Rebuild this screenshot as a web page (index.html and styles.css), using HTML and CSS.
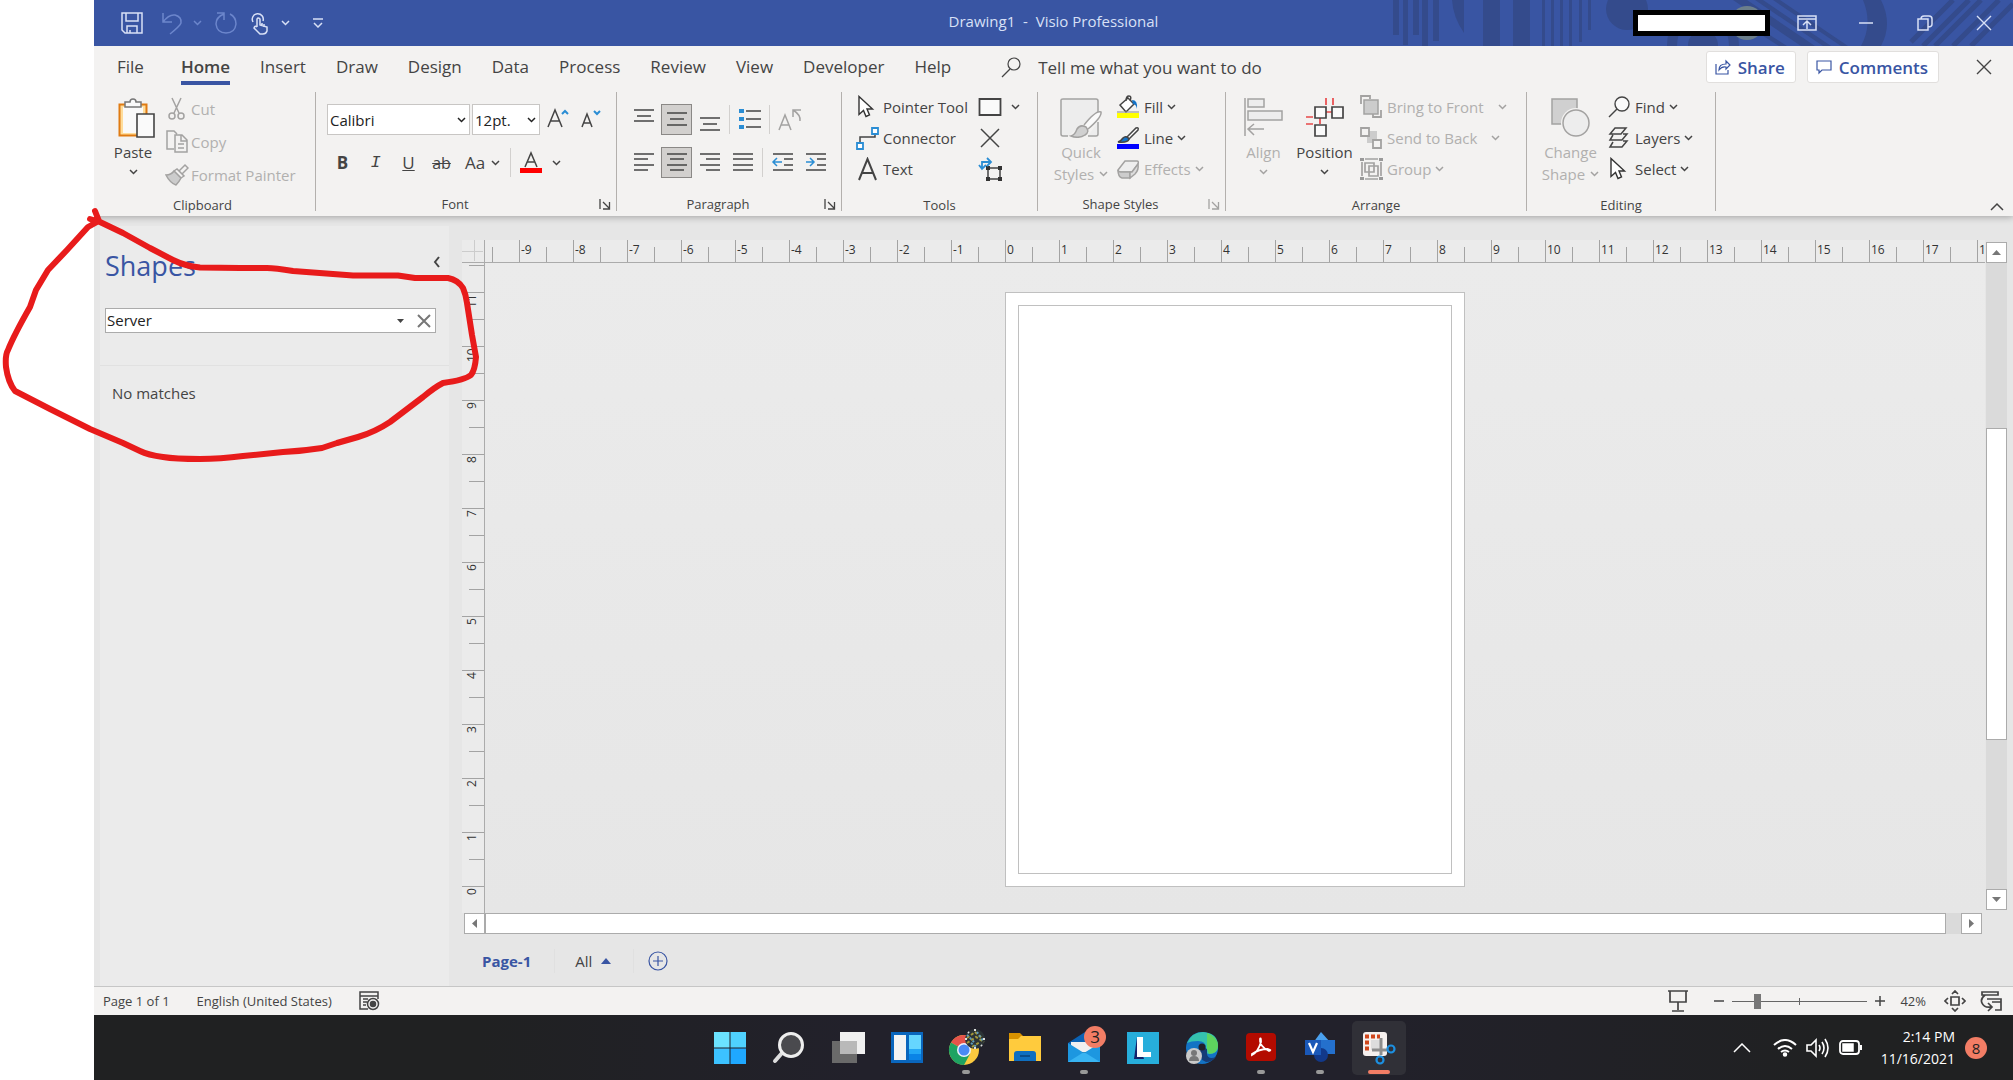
FILE: index.html
```html
<!DOCTYPE html>
<html lang="en">
<head>
    <meta charset="UTF-8">
    <meta name="viewport" content="width=device-width, initial-scale=1.0">
    <title>Drawing1 - Visio Professional</title>
    <link rel="stylesheet" href="styles.css">
</head>
<body>
    <!-- shared icons -->
    <svg class="sprite" width="0" height="0" aria-hidden="true">
        <symbol id="chevron" viewBox="0 0 9 6"><path d="M1 1l3.500 3.500L8 1" fill="none" stroke="currentColor" stroke-width="1.500"/></symbol>
        <symbol id="launcher" viewBox="0 0 12 12"><path d="M1 0v10M4 3l6 6M10.500 3v7H4" fill="none" stroke="currentColor" stroke-width="1.300"/></symbol>
        <symbol id="close" viewBox="0 0 16 16"><path d="M1 1l14 14M15 1L1 15" fill="none" stroke="currentColor" stroke-width="1.400"/></symbol>
        <symbol id="pointer" viewBox="0 0 24 24"><path d="M4 1.500v18l4.500-4 2.500 6 3.500-1.500-2.500-6h5.500z" fill="#fff" stroke="#333" stroke-width="1.400"/></symbol>
        <symbol id="find" viewBox="0 0 24 24"><circle cx="15" cy="9" r="7" fill="#fafafa" stroke="currentColor" stroke-width="1.400"/><path d="M10 14l-8 8" stroke="currentColor" stroke-width="1.500"/></symbol>
    </svg>

    <div class="window">
        <header class="title-bar">
            <svg class="pattern" viewBox="0 0 650 46" width="650" height="46">
                <g fill="#344b8c">
                    <path d="M30 0h6v35h-6zM40 0h5v45h-5zM50 0h6v35h-6zM59 0h6v46h-6zM70 0h6v41h-6zM89 0h12v33Q90 17 89 0zM120 0h17v46h-17zM150 0h17v46h-17z"/>
                    <path d="M179 0h3v46h-3zM188 0h3v46h-3zM197 0h3v46h-3zM206 0h3v46h-3zM216 0h3v42h-3zM225 0h3v30h-3z"/>
                    <circle cx="264" cy="9" r="21"/>
                    <path d="M304 46q0-34 36-34t36 34h-10q0-24-26-24t-26 24zM325 46q0-14 15-14t15 14z"/>
                    <path d="M370 0h14l68 46h-14zM392 0h8l68 46h-8zM410 0h7l68 46h-7zM374 14l50 32h-8l-44-28zM500 0h18q12 24 0 46h-20q12-22 2-46z"/>
                </g>
                <path d="M548 42l42-42M560 46l46-46M572 46l46-46M590 46l46-46M608 46l42-42" stroke="#344b8c" stroke-width="5"/>
            </svg>
            <div class="quick-access">
                <button aria-label="Save"><svg width="24" height="24" viewBox="0 0 24 24"><path d="M2 2h20v20H5l-3-3zM6 2v8h12V2M7 22v-7h10v7M10 19v3"/></svg></button>
                <button class="dim undo" aria-label="Undo"><svg width="24" height="24" viewBox="0 0 24 24"><path d="M3 2v9h9M3 11Q9 3 15 4q7 2 6 8-1 3-11 11"/></svg></button>
                <button class="dim narrow" aria-label="Undo history"><svg width="9" height="6"><use href="#chevron"/></svg></button>
                <button class="dim redo" aria-label="Redo"><svg width="24" height="24" viewBox="0 0 24 24"><path d="M3 2h7v7M10 3Q2 6 2 13q1 9 10 9 9 0 10-9 0-7-6-10"/></svg></button>
                <button class="touch" aria-label="Touch mode"><svg width="24" height="24" viewBox="0 0 24 24"><path d="M4 11a5.500 5.500 0 1 1 10-1M8 16V8q1-2 3 0v6l7 2v4q-1 3-4 3h-3l-6-6q1-3 3-1M13 12v3M15 13v3"/></svg></button>
                <button class="narrow" aria-label="Touch options"><svg width="9" height="6"><use href="#chevron"/></svg></button>
                <button class="customize" aria-label="Customize toolbar"><svg width="12" height="10" viewBox="0 0 12 10"><path d="M1 1h10M2 5l4 4 4-4"/></svg></button>
            </div>
            <h1>Drawing1&nbsp; -&nbsp; Visio Professional</h1>
            <div class="window-buttons">
                <span class="account"><span class="avatar"></span><span class="name-box"></span></span>
                <button aria-label="Ribbon display options"><svg width="20" height="16" viewBox="0 0 20 16"><path d="M1 1h18v14H1zM1 4h18M10 14V7M6 10l4-4 4 4"/></svg></button>
                <button aria-label="Minimize"><svg width="16" height="16" viewBox="0 0 16 16"><path d="M1 8h14"/></svg></button>
                <button aria-label="Restore"><svg width="16" height="16" viewBox="0 0 16 16"><path d="M1 4h10v11H1zM4 4q0-3 3-3h5q3 0 3 3v5q0 3-4 3"/></svg></button>
                <button aria-label="Close window"><svg width="16" height="16"><use href="#close"/></svg></button>
            </div>
        </header>

        <nav class="tabs">
            <a href="#file" class="file">File</a>
            <a href="#home" class="active">Home</a>
            <a href="#insert">Insert</a>
            <a href="#draw">Draw</a>
            <a href="#design">Design</a>
            <a href="#data">Data</a>
            <a href="#process">Process</a>
            <a href="#review">Review</a>
            <a href="#view">View</a>
            <a href="#developer">Developer</a>
            <a href="#help">Help</a>
            <button class="tell-me"><svg width="22" height="22" viewBox="0 0 22 22"><circle cx="14" cy="8" r="6"/><path d="M10 13l-8 8"/></svg>Tell me what you want to do</button>
            <button class="pill share"><svg width="16" height="16" viewBox="0 0 16 16"><path d="M1 5v10h12v-4M4 11q0-6 7-6V2l4 4-4 4V8q-4-1-7 3z"/></svg>Share</button>
            <button class="pill"><svg width="16" height="16" viewBox="0 0 16 16"><path d="M1 2h14v9H6l-3 3v-3H1z"/></svg>Comments</button>
            <button class="close-doc" aria-label="Close document"><svg width="16" height="16"><use href="#close"/></svg></button>
        </nav>

        <div class="ribbon">
            <section class="group clipboard">
                <div class="group-body">
                    <button class="big paste">
                        <svg width="46" height="40" viewBox="0 0 46 40">
                            <path d="M9.500 6.500h27v31h-27z" fill="#ffdd9b" stroke="#e07b12" stroke-width="2"/>
                            <path d="M13 9h20v26H13z" fill="#fafafa" stroke="none"/>
                            <path d="M15 9V4h5q0-3 3-3t3 3h5v5z" fill="#fafafa" stroke="#777" stroke-width="1.500"/>
                            <path d="M27 16h17v23H27z" fill="#fafafa" stroke="#444" stroke-width="1.600"/>
                        </svg>
                        <span>Paste</span>
                        <svg width="9" height="6"><use href="#chevron"/></svg>
                    </button>
                    <div class="rows">
                        <button disabled><svg width="24" height="24" viewBox="0 0 24 24"><path d="M7 1l7 15M16 1L9 16"/><circle cx="7" cy="19" r="3"/><circle cx="16" cy="19" r="3"/></svg>Cut</button>
                        <button disabled><svg width="24" height="24" viewBox="0 0 24 24"><path d="M9 19H2V1h7l3 3M10 5h7l5 5v12H10zM16 5v6h6M13 14h6M13 18h6"/></svg>Copy</button>
                        <button disabled><svg width="24" height="24" viewBox="0 0 24 24"><path d="M1 12q5 0 8-4l7 7q-2 4-5 7-6-2-10-10z" fill="#ccc"/><path d="M9 8l3-2 7 7-3 2M14 8l6-6 3 3-6 6"/></svg>Format Painter</button>
                    </div>
                </div>
                <div class="group-label"><h2>Clipboard</h2><span class="label-space"></span></div>
            </section>

            <section class="group font">
                <div class="group-body toolbars">
                    <div class="toolbar">
                        <label class="combo family"><select aria-label="Font"><option>Calibri</option></select><svg width="9" height="6"><use href="#chevron"/></svg></label>
                        <label class="combo size"><select aria-label="Font size"><option>12pt.</option></select><svg width="9" height="6"><use href="#chevron"/></svg></label>
                        <button aria-label="Increase font size"><svg width="24" height="24" viewBox="0 0 24 24"><path d="M2 19L9 2l7 17M5 13h8"/><path d="M16 6l3-3 3 3" stroke="#2a8dd4" stroke-width="2"/></svg></button>
                        <button aria-label="Decrease font size"><svg width="24" height="24" viewBox="0 0 24 24"><path d="M3 19L8 6l5 13M5 15h7"/><path d="M15 3l3 3 3-3" stroke="#2a8dd4" stroke-width="2"/></svg></button>
                    </div>
                    <div class="toolbar letters">
                        <button class="bold">B</button>
                        <button class="italic">I</button>
                        <button class="underline">U</button>
                        <button class="strike">ab</button>
                        <button class="case">Aa<svg width="9" height="6"><use href="#chevron"/></svg></button>
                        <span class="sep"></span>
                        <button aria-label="Font color"><svg width="24" height="24" viewBox="0 0 24 24"><path d="M6 16l6-14 6 14M8 11h8"/><path d="M1 17h22v5H1z" fill="#f00" stroke="none"/></svg></button>
                        <button class="narrow" aria-label="Font color options"><svg width="9" height="6"><use href="#chevron"/></svg></button>
                    </div>
                </div>
                <div class="group-label"><h2>Font</h2><button aria-label="Font settings"><svg width="12" height="12"><use href="#launcher"/></svg></button></div>
            </section>

            <section class="group paragraph">
                <div class="group-body toolbars">
                    <div class="toolbar">
                        <button aria-label="Align top"><svg width="24" height="24" viewBox="0 0 24 24"><path d="M2 2h20M5 8h14M2 13h20"/></svg></button>
                        <button class="on" aria-label="Align middle"><svg width="24" height="24" viewBox="0 0 24 24"><path d="M2 5h20M5 11h14M2 17h20"/></svg></button>
                        <button aria-label="Align bottom"><svg width="24" height="24" viewBox="0 0 24 24"><path d="M2 10h20M5 16h14M2 22h20"/></svg></button>
                        <span class="sep"></span>
                        <button aria-label="Bullets"><svg width="24" height="24" viewBox="0 0 24 24"><path d="M8 3h15M8 11h15M8 19h15"/><path d="M1 1h5v4H1zM1 9h5v4H1zM1 17h5v4H1z" fill="#2a8dd4" stroke="none"/></svg></button>
                        <span class="sep"></span>
                        <button disabled aria-label="Rotate text"><svg width="24" height="24" viewBox="0 0 24 24"><path d="M1 22L7 7l6 15M3 17h8M15 9V2h8M15 2q8 5 7 11"/></svg></button>
                    </div>
                    <div class="toolbar">
                        <button aria-label="Align left"><svg width="24" height="24" viewBox="0 0 24 24"><path d="M2 3h20M2 8h14M2 14h20M2 19h14"/></svg></button>
                        <button class="on" aria-label="Align center"><svg width="24" height="24" viewBox="0 0 24 24"><path d="M2 3h20M5 8h14M2 14h20M5 19h14"/></svg></button>
                        <button aria-label="Align right"><svg width="24" height="24" viewBox="0 0 24 24"><path d="M2 3h20M8 8h14M2 14h20M8 19h14"/></svg></button>
                        <button aria-label="Justify"><svg width="24" height="24" viewBox="0 0 24 24"><path d="M2 3h20M2 8h20M2 14h20M2 19h20"/></svg></button>
                        <span class="sep"></span>
                        <button aria-label="Decrease indent"><svg width="24" height="24" viewBox="0 0 24 24"><path d="M2 3h20M13 8h9M13 14h9M2 19h20"/><path d="M11 11H3M6 7l-4 4 4 4" stroke="#2a8dd4"/></svg></button>
                        <button aria-label="Increase indent"><svg width="24" height="24" viewBox="0 0 24 24"><path d="M2 3h20M13 8h9M13 14h9M2 19h20"/><path d="M2 11h8M6 7l4 4-4 4" stroke="#2a8dd4"/></svg></button>
                    </div>
                </div>
                <div class="group-label"><h2>Paragraph</h2><button aria-label="Paragraph settings"><svg width="12" height="12"><use href="#launcher"/></svg></button></div>
            </section>

            <section class="group tools">
                <div class="group-body">
                    <div class="rows">
                        <button><svg width="24" height="24"><use href="#pointer"/></svg>Pointer Tool</button>
                        <button><svg width="24" height="24" viewBox="0 0 24 24"><path d="M5 17v-6h15V8"/><path d="M2 17h6v6H2zM17 2h6v6h-6z" fill="#fff" stroke="#2a8dd4" stroke-width="1.800"/></svg>Connector</button>
                        <button><svg width="24" height="24" viewBox="0 0 24 24"><path d="M4 23L12.500 2 21 23M7 16h11" stroke-width="2"/></svg>Text</button>
                    </div>
                    <div class="rows draw-tools">
                        <button aria-label="Rectangle"><svg width="24" height="24" viewBox="0 0 24 24"><path d="M1.500 4h21v16h-21z" fill="#fafafa" stroke-width="1.800"/></svg><svg width="9" height="6"><use href="#chevron"/></svg></button>
                        <button aria-label="Connection point"><svg width="24" height="24" viewBox="0 0 24 24"><path d="M3 3l18 18M21 3L3 21"/></svg></button>
                        <button aria-label="Text block"><svg width="24" height="24" viewBox="0 0 24 24"><path d="M10 11h12v11H10z"/><path d="M8 9h4v4H8zM20 9h4v4h-4zM8 20h4v4H8zM20 20h4v4h-4z" fill="#333" stroke="none"/><path d="M4 11V5h8M9 1l4 4-4 4M1 8l3 4 4-4" stroke="#2a8dd4" stroke-width="1.800"/></svg></button>
                    </div>
                </div>
                <div class="group-label"><h2>Tools</h2></div>
            </section>

            <section class="group shape-styles">
                <div class="group-body">
                    <button class="big" disabled>
                        <svg width="42" height="40" viewBox="0 0 42 40">
                            <path d="M8 38H3q-2 0-2-2V2q0-1 2-1h33q2 0 2 2v12M38 24v12q0 2-2 2h-8" fill="#ededed" stroke-width="1.500"/>
                            <path d="M24 27Q36 12 41 14q1 5-13 17" fill="#fafafa"/>
                            <path d="M11 38q4-1 6-7 3-5 9-2 4 5-1 8-6 4-14 1z" fill="#d0d0d0"/>
                        </svg>
                        <span>Quick</span>
                        <span>Styles<svg width="9" height="6"><use href="#chevron"/></svg></span>
                    </button>
                    <div class="rows">
                        <button><svg width="24" height="24" viewBox="0 0 24 24"><path d="M4 10l8-7 6 6-8 8zM10 6q0-5 3-5t1 5" fill="#fff"/><path d="M16 5q6 0 5 9-1-5-4-5z" fill="#1473c8" stroke="none"/><path d="M1 18h22v5H1z" fill="#ff0" stroke="none"/><path d="M1 17h22" stroke="#888" stroke-width="1"/></svg>Fill<svg width="9" height="6"><use href="#chevron"/></svg></button>
                        <button><svg width="24" height="24" viewBox="0 0 24 24"><path d="M11 11l9-9q3-1 2 2l-9 9z" fill="#fff"/><path d="M2 16q3-1 5-4 3-3 6 1-1 4-11 3z" fill="#1473c8"/><path d="M1 18h22v5H1z" fill="#00f" stroke="none"/></svg>Line<svg width="9" height="6"><use href="#chevron"/></svg></button>
                        <button disabled><svg width="24" height="24" viewBox="0 0 24 24"><path d="M2 13L9 4h12q2 0 1 3l-6 8H5q-3 0-3-2z" fill="#eee"/><path d="M2 13q0 2 3 2h9v6H6q-4-1-4-8z" fill="#ccc"/><path d="M14 15h2l6-8q1 6-3 10l-5 4z" fill="#ddd"/></svg>Effects<svg width="9" height="6"><use href="#chevron"/></svg></button>
                    </div>
                </div>
                <div class="group-label"><h2>Shape Styles</h2><button disabled aria-label="Shape style settings"><svg width="12" height="12"><use href="#launcher"/></svg></button></div>
            </section>

            <section class="group arrange">
                <div class="group-body">
                    <button class="big" disabled>
                        <svg width="42" height="40" viewBox="0 0 42 40"><path d="M2 0v38" stroke-width="1.500"/><path d="M5 1h16v8H5zM5 13h34v9H5z" fill="#ededed" stroke-width="1.500"/><path d="M21 31H6M11 26l-6 5 6 6"/></svg>
                        <span>Align</span>
                        <svg width="9" height="6"><use href="#chevron"/></svg>
                    </button>
                    <button class="big">
                        <svg width="42" height="40" viewBox="0 0 42 40"><path d="M22 0v7M29 0v7M22 14h7M2 19h7M2 26h7M16 20v6" stroke="#e8494a" stroke-width="1.700"/><path d="M11 9h11v11H11zM28 9h11v11H28zM11 27h11v11H11z" fill="#fafafa" stroke-width="1.700"/></svg>
                        <span>Position</span>
                        <svg width="9" height="6"><use href="#chevron"/></svg>
                    </button>
                    <div class="rows">
                        <button class="split" disabled><svg width="24" height="24" viewBox="0 0 24 24"><path d="M5 5h14v14H5z" fill="#ccc"/><path d="M2 9V1h9v3M22 15v7h-8v-3" stroke-width="1.800"/></svg>Bring to Front<svg width="9" height="6"><use href="#chevron"/></svg></button>
                        <button class="split" disabled><svg width="24" height="24" viewBox="0 0 24 24"><path d="M8 5h10v12H8z" fill="#ccc" stroke="none"/><path d="M2 2h8v8H2zM14 14h8v8h-8z" fill="#f3f2f1" stroke-width="1.800"/></svg>Send to Back<svg width="9" height="6"><use href="#chevron"/></svg></button>
                        <button disabled><svg width="24" height="24" viewBox="0 0 24 24"><path d="M6 6h9v9H6zM10 9h9v10h-9zM3 5v14M22 5v14M6 2h13M6 22h13" stroke-width="1.700"/><path d="M1 1h4v3H1zM20 1h4v3h-4zM1 20h4v3H1zM20 20h4v3h-4z" fill="#999" stroke="none"/></svg>Group<svg width="9" height="6"><use href="#chevron"/></svg></button>
                    </div>
                </div>
                <div class="group-label"><h2>Arrange</h2></div>
            </section>

            <section class="group editing">
                <div class="group-body">
                    <button class="big" disabled>
                        <svg width="42" height="40" viewBox="0 0 42 40"><path d="M2 1h25v25H2z" fill="#d0d0d0" stroke-width="1.500"/><circle cx="26" cy="25" r="15" fill="#f3f2f1" stroke="none"/><circle cx="26" cy="25" r="13" fill="#ededed" stroke-width="1.500"/></svg>
                        <span>Change</span>
                        <span>Shape<svg width="9" height="6"><use href="#chevron"/></svg></span>
                    </button>
                    <div class="rows">
                        <button><svg width="24" height="24"><use href="#find"/></svg>Find<svg width="9" height="6"><use href="#chevron"/></svg></button>
                        <button><svg width="24" height="24" viewBox="0 0 24 24"><path d="M8 2h11l-5 6H3zM6 9l-3 5h12l5-6h-4M6 16l-3 5h12l5-6h-4"/></svg>Layers<svg width="9" height="6"><use href="#chevron"/></svg></button>
                        <button><svg width="24" height="24"><use href="#pointer"/></svg>Select<svg width="9" height="6"><use href="#chevron"/></svg></button>
                    </div>
                </div>
                <div class="group-label"><h2>Editing</h2></div>
            </section>

            <button class="collapse" aria-label="Collapse ribbon"><svg width="14" height="9" viewBox="0 0 14 9"><path d="M1 8l6-6 6 6"/></svg></button>
        </div>

        <main class="workspace">
            <aside class="shapes">
                <div class="shapes-title">
                    <h2>Shapes</h2>
                    <button aria-label="Minimize shapes pane"><svg width="8" height="12" viewBox="0 0 8 12"><path d="M6 1L2 6l4 5" stroke-width="2"/></svg></button>
                </div>
                <div class="search">
                    <input type="text" value="Server" aria-label="Search shapes">
                    <button aria-label="Search history"><svg width="7" height="4" viewBox="0 0 7 4"><path d="M0 0h7L3.500 4z" fill="#444" stroke="none"/></svg></button>
                    <button aria-label="Clear search"><svg width="14" height="14" viewBox="0 0 14 14"><path d="M1 1l12 12M13 1L1 13" stroke-width="2"/></svg></button>
                </div>
                <p class="no-matches">No matches</p>
            </aside>

            <div class="drawing">
                <div class="corner"></div>
                <div class="ruler-x">
                    <span class="mark first"></span><span class="mark">-9</span><span class="mark">-8</span><span class="mark">-7</span><span class="mark">-6</span><span class="mark">-5</span><span class="mark">-4</span><span class="mark">-3</span><span class="mark">-2</span><span class="mark">-1</span><span class="mark">0</span><span class="mark">1</span><span class="mark">2</span><span class="mark">3</span><span class="mark">4</span><span class="mark">5</span><span class="mark">6</span><span class="mark">7</span><span class="mark">8</span><span class="mark">9</span><span class="mark">10</span><span class="mark">11</span><span class="mark">12</span><span class="mark">13</span><span class="mark">14</span><span class="mark">15</span><span class="mark">16</span><span class="mark">17</span><span class="mark">18</span>
                </div>
                <div class="ruler-y">
                    <span class="mark first"></span><span class="mark">11</span><span class="mark">10</span><span class="mark">9</span><span class="mark">8</span><span class="mark">7</span><span class="mark">6</span><span class="mark">5</span><span class="mark">4</span><span class="mark">3</span><span class="mark">2</span><span class="mark">1</span><span class="mark">0</span>
                </div>
                <div class="canvas">
                    <div class="page"><div class="page-margin"></div></div>
                </div>
                <div class="scroll-y">
                    <button aria-label="Scroll up"><svg width="9" height="5" viewBox="0 0 9 5"><path d="M0 5h9L4.500 0z" fill="#777" stroke="none"/></svg></button>
                    <div class="track"><div class="thumb"></div></div>
                    <button aria-label="Scroll down"><svg width="9" height="5" viewBox="0 0 9 5"><path d="M0 0h9L4.500 5z" fill="#777" stroke="none"/></svg></button>
                </div>
                <div class="scroll-x">
                    <button aria-label="Scroll left"><svg width="5" height="9" viewBox="0 0 5 9"><path d="M5 0v9L0 4.500z" fill="#777" stroke="none"/></svg></button>
                    <div class="track"><div class="thumb"></div></div>
                    <button aria-label="Scroll right"><svg width="5" height="9" viewBox="0 0 5 9"><path d="M0 0v9l5-4.500z" fill="#777" stroke="none"/></svg></button>
                </div>
                <div class="page-tabs">
                    <button class="current">Page-1</button>
                    <button class="all">All<svg width="10" height="6" viewBox="0 0 10 6"><path d="M0 6h10L5 0z" fill="#3955a3" stroke="none"/></svg></button>
                    <button class="add" aria-label="Insert page"><svg width="20" height="20" viewBox="0 0 20 20"><circle cx="10" cy="10" r="9"/><path d="M10 5v10M5 10h10"/></svg></button>
                </div>
            </div>
        </main>

        <footer class="status-bar">
            <span>Page 1 of 1</span>
            <span>English (United States)</span>
            <button aria-label="Macro recording"><svg width="22" height="20" viewBox="0 0 22 20"><path d="M1 1h18v4H1zM1 5v13h8M4 8h5M4 11h4M4 14h3M19 5v3"/><circle cx="14" cy="13" r="5.500" fill="#f3f2f1"/><circle cx="14" cy="13" r="2.500" fill="#444"/></svg></button>
            <div class="zoom">
                <button class="present" aria-label="Presentation mode"><svg width="22" height="22" viewBox="0 0 22 22"><path d="M1 1h20M3 1v11h16V1M11 12v8M5 21h12" stroke-width="1.700"/></svg></button>
                <button aria-label="Zoom out"><svg width="12" height="12" viewBox="0 0 12 12"><path d="M1 6h10"/></svg></button>
                <input type="range" min="0" max="100" value="17" aria-label="Zoom">
                <button aria-label="Zoom in"><svg width="12" height="12" viewBox="0 0 12 12"><path d="M1 6h10M6 1v10"/></svg></button>
                <span class="percent">42%</span>
                <button class="fit" aria-label="Fit page"><svg width="22" height="22" viewBox="0 0 22 22"><path d="M7 7h8v8H7zM8 4l3-3 3 3M8 18l3 3 3-3M4 8l-3 3 3 3M18 8l3 3-3 3" stroke-width="1.700"/></svg></button>
                <button aria-label="Switch windows"><svg width="22" height="22" viewBox="0 0 22 22"><path d="M2 5V2h16v3zM5 5q-5 4-3 8 2 5 9 4M8 13l4 4-4 4M12 9h9v11h-6M7 9h14v3h-9" stroke-width="1.700"/></svg></button>
            </div>
        </footer>

        <div class="taskbar">
            <div class="apps">
                <button aria-label="Start"><svg width="34" height="34" viewBox="0 0 34 34"><path d="M1 1h15.500v15.500H1z" fill="#6be3ff"/><path d="M17.500 1H33v15.500H17.500z" fill="#4fd2ff"/><path d="M1 17.500h15.500V33H1z" fill="#3cc2ff"/><path d="M17.500 17.500H33V33H17.500z" fill="#1fa8ff"/></svg></button>
                <button aria-label="Search"><svg width="34" height="34" viewBox="0 0 34 34"><path d="M10 22l-7 8" stroke="#ddd" stroke-width="4" stroke-linecap="round"/><circle cx="19" cy="14" r="11.500" fill="#4a4a4e" stroke="#eee" stroke-width="3"/></svg></button>
                <button aria-label="Task view"><svg width="34" height="34" viewBox="0 0 34 34"><path d="M9 1h25v22H9z" fill="#f0f0f0"/><path d="M1 10h25v22H1z" fill="#6a6a6a"/><path d="M9 10h17v13H9z" fill="#b9b9b9"/></svg></button>
                <button aria-label="Widgets"><svg width="34" height="34" viewBox="0 0 34 34"><path d="M1 1h32v31H1z" fill="#0a66bd"/><path d="M4 4h12v25H4z" fill="#f3f3f3"/><path d="M19 4h12v14H19z" fill="#66d6ff"/><path d="M19 18h12v5H19z" fill="#22a7f5"/><path d="M19 23h12v6H19z" fill="#0a84e6"/></svg></button>
                <button class="running" aria-label="Chrome"><svg width="38" height="38" viewBox="0 0 38 38"><circle cx="17" cy="21" r="15" fill="#fcca3f"/><path d="M17 21L4 13.500A15 15 0 0 1 30 13.500L31 15z" fill="#e5534b"/><path d="M17 21L4 13.500A15 15 0 0 0 17 36l6-11z" fill="#1ea362"/><circle cx="17" cy="21" r="7" fill="#eef3fb"/><circle cx="17" cy="21" r="5.500" fill="#4a8af4"/><circle cx="28" cy="10" r="10" fill="#2c3336"/><path d="M20 9l8-6 7 6M20 14l9-6 8 5M25 18l8-5" fill="none" stroke="#a59a3c" stroke-width="2" stroke-dasharray="3 2"/><path d="M20 6l7 7M30 3l6 9M24 14l6 4" stroke="#5f9dbb" stroke-width="2" stroke-dasharray="2 2"/><path d="M18 10h2M36 10h2M28 0v2M28 18v2M21 3l1 1M34 16l1 1" stroke="#ddd" stroke-width="2"/></svg></button>
                <button aria-label="File Explorer"><svg width="34" height="34" viewBox="0 0 34 34"><path d="M1 2h11l3 3v6H1z" fill="#d89200"/><path d="M1 8h9l3-3h20v25H1z" fill="#ffcb3d"/><path d="M6 30v-7q0-3 3-3h16q3 0 3 3v7z" fill="#0f6fc0"/><path d="M12 25h10" stroke="#0a4d8a" stroke-width="2"/></svg></button>
                <button class="running mail" aria-label="Mail"><svg width="34" height="34" viewBox="0 0 34 34"><path d="M1 12L18 1l15 11v5H1z" fill="#0b62b4"/><path d="M4 11h26v10H4z" fill="#f0f0f0"/><path d="M1 12l16 10 16-10v19H1z" fill="#1d97e0"/><path d="M1 31l16-10 16 10z" fill="#38b4f2"/></svg><span class="badge">3</span></button>
                <button aria-label="L app"><svg width="34" height="34" viewBox="0 0 34 34"><path d="M1 1h32v32H1z" fill="#27aedb"/><path d="M11 6L8 28h10z" fill="#14236c"/><path d="M11 6h6v15h8v5H11z" fill="#fff"/></svg></button>
                <button aria-label="Edge"><svg width="34" height="34" viewBox="0 0 34 34"><circle cx="17" cy="17" r="16" fill="#1373c4"/><path d="M2 12Q7 1 18 1q15 1 15 14 0 8-9 8-6-1-3-6 0-7-8-7-7 0-11 2z" fill="#35c1ae"/><path d="M22 2q11 4 11 13 0 7-9 8l-2-5z" fill="#5ed45e"/><path d="M22 18q-5-4-8 1-2 8 7 12 6 0 10-5-8 3-9-3z" fill="#153d78"/><circle cx="17" cy="16" r="3.500" fill="#22212b"/><circle cx="9" cy="25" r="8" fill="#c9c9c9"/><circle cx="9" cy="22" r="3" fill="#777"/><path d="M4 30q0-5 5-5t5 5z" fill="#777"/></svg></button>
                <button class="running" aria-label="Acrobat"><svg width="34" height="34" viewBox="0 0 34 34"><rect x="2" y="2" width="30" height="28" rx="4" fill="#b30b00"/><path d="M8 24q6-3 9-13 0-5-1-3-1 7 9 12 3-1-1-2-9 0-16 5z" fill="none" stroke="#fff" stroke-width="1.800"/></svg></button>
                <button class="running" aria-label="Visio"><svg width="34" height="34" viewBox="0 0 34 34"><path d="M18 1l9 10-9 10-8-9z" fill="#4aa0ee"/><path d="M14 9h18v14H14z" fill="#2470cd"/><circle cx="18" cy="24" r="7" fill="#12398a"/><path d="M2 9h16v15H2z" fill="#1a58b8"/><path d="M6 12l4 9 4-9" fill="none" stroke="#fff" stroke-width="2.200"/></svg></button>
                <button class="running active-app" aria-label="Snipping Tool"><svg width="36" height="36" viewBox="0 0 36 36"><rect x="2" y="2" width="24" height="24" rx="3" fill="#f5f0ee"/><path d="M4 6.500h15M6 10.500v10" stroke="#d0461b" stroke-width="4" stroke-dasharray="4 2"/><path d="M10 10h10v10H10z" fill="#ddd"/><path d="M20 8v17M11 20h16" stroke="#8d8d8d" stroke-width="3"/><circle cx="30" cy="19" r="3.500" fill="none" stroke="#1c8fe0" stroke-width="2.200"/><circle cx="19" cy="30" r="3.500" fill="none" stroke="#1c8fe0" stroke-width="2.200"/></svg></button>
            </div>
            <div class="tray">
                <button aria-label="Show hidden icons"><svg width="18" height="10" viewBox="0 0 18 10"><path d="M1 9l8-8 8 8"/></svg></button>
                <svg class="wifi" width="24" height="18" viewBox="0 0 24 18"><path d="M1 6q11-10 22 0M5 10q7-6 14 0M8 13q4-3 8 0" stroke-width="2"/><circle cx="12" cy="15.500" r="1.500" fill="#fff"/></svg>
                <svg class="volume" width="24" height="20" viewBox="0 0 24 20"><path d="M1 7h4l5-5v16l-5-5H1zM13 7q2 3 0 6M16 4q4 6 0 12M19 1q6 9 0 18" stroke-width="1.600"/></svg>
                <svg class="battery" width="24" height="16" viewBox="0 0 24 16"><rect x="1" y="1" width="19" height="13" rx="3" stroke-width="1.800"/><path d="M4 4h10v7H4z" fill="#fff"/><path d="M22 5v5" stroke-width="2"/></svg>
                <div class="clock"><time>2:14 PM</time><time>11/16/2021</time></div>
                <span class="badge">8</span>
            </div>
        </div>
    </div>

    <!-- red ink circle around the search pane -->
    <svg class="ink" width="490" height="480" viewBox="0 0 490 480">
        <path d="M95 211L99 221M90 219L100 222L123 233L150 248L173 260Q185 266 200 267.500L240 268H267Q275 268 293 271L333 274L353 275.500H398L415 278H448Q458 280 463 288Q466 295 467 303L472 335L476 357Q475 370 471 375Q465 380 443 383Q435 387 423 397L390 422Q375 432 358 437L337 443L322 448Q303 451 283 452L243 456Q220 459 200 459Q175 459 163 457Q148 455 140 451L123 443L90 429L50 409L15 391Q8 382 6 367Q5 355 8 350Q14 335 30 307L36 290L48 270L67 250L88 227L97 222"/>
    </svg>
</body>
</html>
```
FILE: styles.css
```css
* {
    box-sizing: border-box;
}

body {
    margin: 0;
    background-color: #fff;
    color: #444;
    font-family: "Open Sans", "Noto Sans", sans-serif;
    font-size: 15px;
    overflow: hidden;
}

h1, h2, p {
    margin: 0;
    font-weight: normal;
}

button, input, select {
    font: inherit;
    color: inherit;
}

button {
    display: flex;
    align-items: center;
    justify-content: center;
    padding: 0;
    border: none;
    background: none;
    white-space: nowrap;
}

button:disabled {
    color: #b1b0af;
}

svg {
    flex: none;
    fill: none;
    stroke: currentColor;
    stroke-width: 1.5;
}

.sprite {
    position: absolute;
}

button:disabled svg {
    color: #a3a2a1;
}

.window {
    display: flex;
    flex-direction: column;
    height: 100vh;
    margin-left: 94px;
}

/* Title bar */
.title-bar {
    position: relative;
    display: grid;
    grid-template-columns: 1fr auto 1fr;
    align-items: center;
    height: 46px;
    background-color: #3955a3;
    color: #d8e0f6;
}

.pattern {
    position: absolute;
    top: 0;
    right: 0;
    stroke: none;
}

.quick-access {
    display: flex;
    align-items: center;
    height: 46px;
    padding-left: 26px;
}

.quick-access button {
    width: 24px;
    margin-right: 16px;
}

.quick-access .dim {
    color: #6c86cc;
}

.quick-access .narrow {
    width: 10px;
}

.quick-access .undo {
    margin-right: 8px;
}

.quick-access .undo + .narrow {
    margin-right: 12px;
}

.quick-access .redo {
    margin-right: 11px;
}

.quick-access .touch {
    margin-right: 7px;
}

.title-bar h1 {
    font-size: 15px;
    line-height: 40px;
    padding-bottom: 4px;
}

.window-buttons {
    position: relative;
    display: flex;
    align-items: center;
    justify-content: flex-end;
}

.window-buttons button {
    width: 59px;
}

.account {
    position: relative;
    width: 137px;
    height: 26px;
    margin-right: 7px;
}

.avatar {
    position: absolute;
    top: -4px;
    right: 6px;
    width: 34px;
    height: 34px;
    border-radius: 50%;
    background-color: #6c7f8b;
}

.name-box {
    position: absolute;
    inset: 0;
    border: 5px solid #000;
    background-color: #fff;
}

/* Tabs */
.tabs {
    display: flex;
    align-items: center;
    height: 40px;
    padding: 2px 14px 0 8px;
    background-color: #f3f2f1;
    font-size: 17px;
}

.tabs a {
    margin: 0 15px;
    color: #444;
    line-height: 36px;
    text-decoration: none;
}

.tabs .file {
    margin-right: 22px;
}

.tabs .active {
    border: solid transparent;
    border-width: 4px 0;
    border-bottom-color: #3955a3;
    font-weight: 600;
    line-height: 28px;
}

.tell-me {
    gap: 16px;
    margin-left: 34px;
}

.tell-me svg {
    stroke-width: 1.2;
}

.pill {
    gap: 7px;
    height: 32px;
    margin-right: 11px;
    padding: 0 10px 0 8px;
    border: 1px solid #e1dfdd;
    border-radius: 3px;
    background-color: #fff;
    color: #3955a3;
    font-weight: 600;
}

.pill svg {
    stroke-width: 1.2;
}

.share {
    margin-left: auto;
}

.close-doc {
    width: 31px;
    margin-left: 18px;
}

/* Ribbon */
.ribbon {
    position: relative;
    z-index: 1;
    display: flex;
    height: 130px;
    padding: 6px 0 5px;
    background-color: #f3f2f1;
    box-shadow: 0 1px 7px rgba(0, 0, 0, 0.3);
    clip-path: inset(0 0 -10px 0);
}

.group {
    display: flex;
    flex-direction: column;
    flex: none;
    border-right: 1px solid #b3b0ad;
}

.clipboard {
    width: 222px;
}

.clipboard .group-body {
    padding-left: 9px;
}

.font {
    width: 301px;
}

.paragraph {
    width: 225px;
}

.tools {
    width: 196px;
}

.shape-styles {
    width: 188px;
}

.arrange {
    width: 301px;
}

.editing {
    width: 189px;
}

.group-body {
    display: flex;
    flex: 1;
}

.group-label {
    display: flex;
    line-height: 11px;
}

.group-label h2 {
    flex: 1;
    font-size: 13px;
    text-align: center;
}

.group-label button {
    width: 22px;
}

.label-space {
    width: 4px;
}

.big {
    flex-direction: column;
    justify-content: flex-start;
    width: 61px;
    padding-top: 6px;
    line-height: 22px;
}

.big > svg:first-child {
    margin-bottom: 3px;
}

.big span + svg {
    margin-top: 6px;
}

.big span {
    display: flex;
    align-items: center;
    gap: 5px;
}

.clipboard .big {
    width: 60px;
}

.rows {
    display: flex;
    flex: none;
    flex-direction: column;
    margin-top: -1px;
}

.rows button {
    justify-content: flex-start;
    gap: 4px;
    height: 31px;
}

.rows .split svg:last-child {
    margin-left: 10px;
}

.clipboard .rows {
    padding: 1px 0 0 2px;
}

.clipboard .rows button {
    gap: 2px;
    height: 33px;
}

.tools .group-body {
    padding-left: 13px;
}

.tools .rows {
    width: 123px;
}

.tools .draw-tools {
    width: 60px;
}

.draw-tools button {
    gap: 9px;
}

.shape-styles .group-body {
    padding-left: 8px;
}

.shape-styles .big {
    width: 70px;
}

.arrange .group-body {
    padding-left: 7px;
}

.arrange .rows {
    padding-left: 4px;
}

.editing .group-body {
    padding-left: 7px;
}

.editing .big {
    width: 73px;
}

.toolbars {
    flex-direction: column;
    gap: 12px;
    padding: 12px 0 0 11px;
}

.toolbar {
    display: flex;
    align-items: center;
    gap: 2px;
}

.toolbar button {
    width: 31px;
    height: 31px;
}

.toolbar .on {
    border: 1px solid #8a8886;
    background-color: #d2d0ce;
}

.sep {
    width: 1px;
    height: 29px;
    margin: 0 2px;
    background-color: #d2d0ce;
}

.letters {
    font-size: 17px;
}

.letters .bold {
    font-weight: bold;
}

.letters .italic {
    font-family: "Liberation Mono", monospace;
    font-style: italic;
}

.letters .underline {
    text-decoration: underline;
}

.letters .strike {
    font-size: 16px;
    text-decoration: line-through;
}

.letters .case {
    gap: 6px;
    width: 47px;
}

.letters .narrow {
    width: 16px;
}

.combo {
    display: flex;
    align-items: center;
    height: 31px;
    padding-right: 3px;
    border: 1px solid #c8c6c4;
    background-color: #fff;
    color: #222;
}

.combo select {
    flex: 1;
    min-width: 0;
    padding: 0 0 0 2px;
    border: none;
    background: none;
    appearance: none;
}

.family {
    width: 143px;
}

.size {
    width: 68px;
}

.collapse {
    align-self: flex-end;
    margin: 0 9px 0 auto;
}

/* Workspace */
.workspace {
    display: flex;
    flex: 1;
    min-height: 0;
    padding: 10px 6px 0;
    background-color: #e6e6e6;
}

.shapes {
    width: 349px;
    background-color: #ebebeb;
}

.shapes-title {
    display: flex;
    justify-content: space-between;
    padding: 20px 8px 0 5px;
    color: #3955a3;
}

.shapes-title h2 {
    font-size: 27px;
    line-height: 40px;
}

.shapes-title button {
    height: 32px;
    color: #444;
}

.search {
    display: flex;
    height: 25px;
    margin: 22px 13px 0 5px;
    border: 1px solid #ababab;
    background-color: #fff;
    color: #222;
}

.search input {
    flex: 1;
    min-width: 0;
    padding: 0 1px 2px;
    border: none;
    outline: none;
    background: none;
}

.search button {
    width: 23px;
    color: #777;
}

.no-matches {
    margin-top: 32px;
    padding: 17px 12px;
    border-top: 1px solid #e1e1e1;
}

.drawing {
    display: grid;
    grid-template-columns: 23px 1fr 22px;
    grid-template-rows: 23px 1fr 21px 52px;
    flex: 1;
    min-width: 0;
    padding: 14px 0 0 13px;
}

.corner {
    border-right: 1px solid #ababab;
    border-bottom: 1px solid #ababab;
    background:
        linear-gradient(#ccc, #ccc) 12px 0 / 1px 21px no-repeat,
        linear-gradient(#ccc, #ccc) 0 11px / 21px 1px no-repeat,
        #ebebeb;
}

.ruler-x {
    display: flex;
    overflow: hidden;
    border-bottom: 1px solid #ababab;
    background-color: #ebebeb;
}

.mark {
    flex: none;
    color: #333;
    font-size: 12px;
    line-height: 20px;
}

/* whole inch tick on the left, half inch tick in the middle */
.ruler-x .mark {
    width: 54px;
    padding-left: 2px;
    background:
        linear-gradient(#a3a3a3, #a3a3a3) 0 0 / 1px 22px no-repeat,
        linear-gradient(#a3a3a3, #a3a3a3) 27px 7px / 1px 15px no-repeat;
}

.ruler-x .first {
    margin-left: -20px;
}

.ruler-y {
    display: flex;
    flex-direction: column;
    grid-row: 2;
    overflow: hidden;
    border-right: 1px solid #ababab;
    background-color: #ebebeb;
}

.ruler-y .mark {
    display: flex;
    justify-content: flex-end;
    height: 54px;
    padding-bottom: 2px;
    background:
        linear-gradient(#a3a3a3, #a3a3a3) 0 100% / 22px 1px no-repeat,
        linear-gradient(#a3a3a3, #a3a3a3) 0 26px / 15px 1px no-repeat;
    writing-mode: vertical-rl;
    transform: rotate(180deg);
}

.ruler-y .first {
    margin-top: -25px;
}

.canvas {
    display: flex;
    align-items: flex-start;
    justify-content: center;
    min-height: 0;
    padding-top: 29px;
    overflow: hidden;
    background: linear-gradient(#ebebeb, #e6e6e6);
}

.page {
    width: 460px;
    height: 595px;
    padding: 12px;
    border: 1px solid #c0c0c0;
    background-color: #fff;
}

.page-margin {
    height: 100%;
    border: 1px solid #c0c0c0;
}

.scroll-y {
    display: flex;
    flex-direction: column;
    grid-row: 1 / 3;
    grid-column: 3;
    padding: 2px 0 3px 1px;
}

.scroll-x {
    display: flex;
    grid-row: 3;
    grid-column: 1 / 3;
    padding: 0 3px 0 2px;
}

.scroll-x button,
.scroll-y button {
    width: 21px;
    height: 21px;
    border: 1px solid #ababab;
    background-color: #fff;
}

.track {
    flex: 1;
    background-color: #dadada;
}

.thumb {
    height: 100%;
    border: 1px solid #ababab;
    background-color: #fff;
}

.scroll-x .thumb {
    width: 99%;
}

.scroll-y .track {
    display: grid;
    grid-template-rows: 165fr 311fr 149fr;
}

.scroll-y .thumb {
    grid-row: 2;
}

.page-tabs {
    display: flex;
    align-items: center;
    grid-row: 4;
    grid-column: 1 / 3;
    padding: 2px 0 0 20px;
}

.page-tabs button {
    height: 24px;
}

.page-tabs .current {
    padding-right: 23px;
    color: #3955a3;
    font-weight: bold;
}

.page-tabs .all {
    gap: 9px;
    padding: 0 22px 0 20px;
    border: solid #e0e0e0;
    border-width: 0 1px;
}

.page-tabs .add {
    padding-left: 14px;
    color: #3955a3;
}

.page-tabs .add svg {
    stroke-width: 1.2;
}

/* Status bar */
.status-bar {
    display: flex;
    align-items: center;
    gap: 27px;
    height: 29px;
    padding: 0 11px 0 9px;
    border-top: 1px solid #c6c6c6;
    background-color: #f3f2f1;
    font-size: 13px;
}

.zoom {
    display: flex;
    align-items: center;
    margin-left: auto;
}

.present {
    margin-right: 24px;
}

.zoom input {
    width: 135px;
    height: 16px;
    margin: 0 7px;
    background:
        linear-gradient(#666, #666) 50% 50% / 1px 7px no-repeat,
        linear-gradient(#666, #666) 0 50% / 100% 1px no-repeat;
    appearance: none;
}

.zoom input::-webkit-slider-thumb {
    width: 7px;
    height: 15px;
    background-color: #777;
    appearance: none;
}

.percent {
    margin-left: 14px;
}

.fit {
    margin: 0 14px 0 18px;
}

/* Taskbar */
.taskbar {
    display: grid;
    grid-template-columns: 1fr auto 1fr;
    align-items: center;
    height: 65px;
    background: linear-gradient(90deg, #202122 20%, #22212b 40%, #22212b 65%, #202122 90%);
    color: #fff;
}

.apps {
    display: flex;
    grid-column: 2;
    gap: 5px;
    padding-left: 2px;
}

.apps button {
    position: relative;
    width: 54px;
    height: 54px;
    border-radius: 5px;
}

.apps svg {
    stroke: none;
}

.running::after {
    content: "";
    position: absolute;
    bottom: 1px;
    left: 23px;
    width: 8px;
    height: 4px;
    border-radius: 2px;
    background-color: #999;
}

.active-app {
    background-color: #303037;
}

.active-app::after {
    left: 16px;
    width: 22px;
    background-color: #f27d65;
}

.badge {
    width: 22px;
    height: 22px;
    border-radius: 50%;
    background-color: #f27d65;
    color: #222;
    line-height: 22px;
    text-align: center;
}

.mail .badge {
    position: absolute;
    top: 5px;
    right: 5px;
    font-size: 17px;
}

.tray {
    display: flex;
    align-items: center;
    justify-content: flex-end;
    padding-right: 26px;
}

.wifi {
    margin-left: 22px;
}

.volume {
    margin: 0 9px;
}

.clock {
    display: flex;
    flex-direction: column;
    width: 92px;
    margin-right: 10px;
    font-size: 14px;
    line-height: 22px;
    text-align: right;
}

/* Ink */
.ink {
    position: absolute;
    top: 0;
    left: 0;
    z-index: 2;
    stroke: #e81b1b;
    stroke-width: 6;
    stroke-linecap: round;
    stroke-linejoin: round;
    pointer-events: none;
}
```
